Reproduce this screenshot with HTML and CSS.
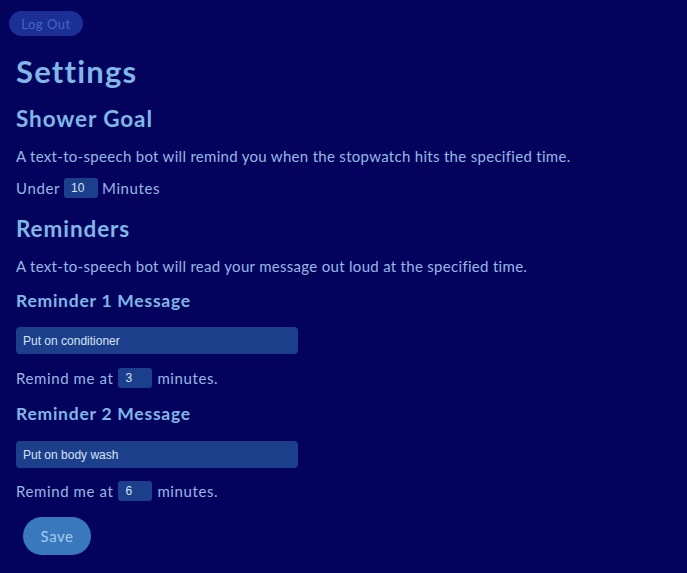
FILE: index.html
```html
<!DOCTYPE html>
<html>
<head>
<meta charset="utf-8">
<link rel="stylesheet" href="styles.css">
</head>
<body>
<div class="top"><button class="logout">Log Out</button></div>
<main class="page">
  <h1 class="title">Settings</h1>
  <h2 class="section">Shower Goal</h2>
  <p class="desc">A text-to-speech bot will remind you when the stopwatch hits the specified time.</p>
  <div class="row">Under <input class="num" type="text" value="10"> Minutes</div>
  <h2 class="section sec2">Reminders</h2>
  <p class="desc">A text-to-speech bot will read your message out loud at the specified time.</p>
  <h3 class="sub">Reminder 1 Message</h3>
  <input class="msg" type="text" value="Put on conditioner">
  <div class="row remind">Remind me at <input class="num" type="text" value="3"> minutes.</div>
  <h3 class="sub sub2">Reminder 2 Message</h3>
  <input class="msg msg2" type="text" value="Put on body wash">
  <div class="row remind remind2">Remind me at <input class="num" type="text" value="6"> minutes.</div>
  <button class="save">Save</button>
</main>
</body>
</html>
```
FILE: styles.css
```css
html, body {
  margin: 0;
  padding: 0;
  background: #03035e;
  height: 100%;
}
body {
  font-family: "Lato", "Open Sans", sans-serif;
  color: #98b7e4;
  overflow: hidden;
}
.top {
  padding: 11px 0 0 9px;
  height: 25px;
}
.logout {
  display: block;
  width: 74px;
  height: 25px;
  border: none;
  border-radius: 13px;
  background: #1c2f95;
  color: #4466c6;
  font-family: "Lato", sans-serif;
  font-size: 13px;
  letter-spacing: 0.5px;
  padding: 0;
}
.page {
  padding-left: 16px;
}
.title {
  margin: 0;
  padding-top: 17px;
  font-size: 31px;
  line-height: 36px;
  font-weight: 700;
  color: #7fb7e5;
  letter-spacing: 1.2px;
}
.section {
  margin: 0;
  padding-top: 17px;
  font-size: 22.5px;
  line-height: 26px;
  font-weight: 700;
  color: #7fb7e5;
  letter-spacing: 0.9px;
}
.sec2 { padding-top: 18px; }
.desc {
  margin: 0;
  padding-top: 14px;
  font-size: 15px;
  line-height: 20px;
  font-weight: 400;
  letter-spacing: 0.3px;
}
.row {
  display: flex;
  align-items: center;
  gap: 4px;
  padding-top: 12px;
  font-size: 15px;
  line-height: 20px;
  letter-spacing: 0.6px;
}
.remind { padding-top: 14px; gap: 5px; }
.remind2 { padding-top: 13px; }
.num {
  box-sizing: border-box;
  width: 34px;
  height: 20px;
  border: none;
  border-radius: 3px;
  background: #1c3f8b;
  color: #d5e3f5;
  font-family: "Liberation Sans", Arial, sans-serif;
  font-size: 12px;
  padding: 0 0 0 7px;
  margin: 0;
  letter-spacing: 0;
}
.sub {
  margin: 0;
  padding-top: 14px;
  font-size: 17.5px;
  line-height: 22px;
  font-weight: 700;
  color: #7fb7e5;
  letter-spacing: 0.75px;
}
.sub2 { padding-top: 15px; }
.msg {
  display: block;
  box-sizing: border-box;
  width: 282px;
  height: 27px;
  margin-top: 15px;
  border: none;
  border-radius: 4px;
  background: #1c3f8b;
  color: #d5e3f5;
  font-family: "Liberation Sans", Arial, sans-serif;
  font-size: 12px;
  padding: 0 0 0 7px;
}
.msg2 { margin-top: 16px; }
.save {
  display: block;
  margin: 16px 0 0 7px;
  width: 68px;
  height: 38px;
  border: none;
  border-radius: 19px;
  background: #3a78bd;
  color: #a3cbef;
  font-family: "Lato", sans-serif;
  font-size: 15px;
  letter-spacing: 0.5px;
  padding: 0;
}
```
